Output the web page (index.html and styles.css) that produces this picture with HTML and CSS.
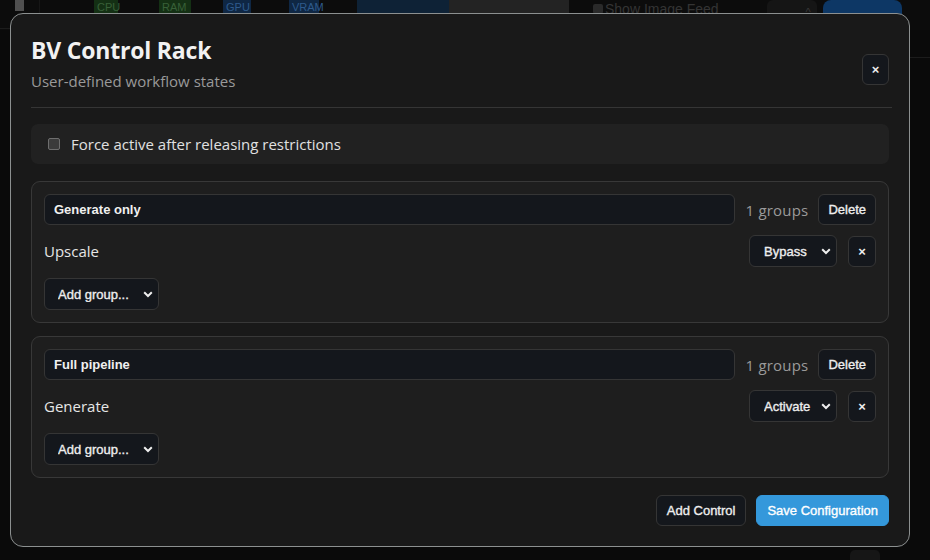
FILE: index.html
```html
<!DOCTYPE html>
<html lang="en">
<head>
<meta charset="utf-8">
<title>BV Control Rack</title>
<link rel="stylesheet" href="styles.css">
</head>
<body>
<div class="app">
  <div class="topbar">
    <span class="bookmark"></span>
    <span class="vsep"></span>
    <span class="stat stat-cpu">CPU</span>
    <span class="stat stat-ram">RAM</span>
    <span class="stat stat-gpu">GPU</span>
    <span class="stat stat-vram">VRAM</span>
    <span class="tab tab-blue"></span>
    <span class="tab tab-gray"></span>
    <span class="feed"><span class="feed-box"></span>Show Image Feed</span>
    <span class="mini">^</span>
    <span class="pill"></span>
  </div>
  <div class="side-line side-left"></div>
  <div class="side-line side-right"></div>
  <div class="bottom-btn"></div>
</div>

<div class="modal">
  <div class="modal-head">
    <div class="head-text">
      <h1 class="title">BV Control Rack</h1>
      <div class="subtitle">User-defined workflow states</div>
    </div>
    <button class="btn btn-x btn-close">×</button>
  </div>

  <label class="force-row">
    <input type="checkbox" class="chk">
    <span>Force active after releasing restrictions</span>
  </label>

  <div class="group-card">
    <div class="card-head">
      <input class="name-input" value="Generate only">
      <span class="count">1 groups</span>
      <button class="btn">Delete</button>
    </div>
    <div class="ctrl-row">
      <span class="ctrl-name">Upscale</span>
      <select class="sel sel-mode"><option>Bypass</option><option>Activate</option></select>
      <button class="btn btn-x btn-rm">×</button>
    </div>
    <select class="sel sel-add"><option>Add group...</option></select>
  </div>

  <div class="group-card">
    <div class="card-head">
      <input class="name-input" value="Full pipeline">
      <span class="count">1 groups</span>
      <button class="btn">Delete</button>
    </div>
    <div class="ctrl-row">
      <span class="ctrl-name">Generate</span>
      <select class="sel sel-mode"><option>Activate</option><option>Bypass</option></select>
      <button class="btn btn-x btn-rm">×</button>
    </div>
    <select class="sel sel-add"><option>Add group...</option></select>
  </div>

  <div class="modal-foot">
    <button class="btn btn-foot">Add Control</button>
    <button class="btn btn-foot btn-primary">Save Configuration</button>
  </div>
</div>
</body>
</html>
```

FILE: styles.css
```css
* { box-sizing: border-box; }
html, body { margin: 0; padding: 0; }
body {
  width: 930px;
  height: 560px;
  overflow: hidden;
  background: #0a0a0a;
  font-family: "Open Sans", "Noto Sans", sans-serif;
  position: relative;
}

/* dimmed background app */
.app { position: absolute; inset: 0; }
.topbar {
  display: flex;
  align-items: flex-start;
  height: 30px;
  background: #0c0c0c;
  font-family: "Liberation Sans", Arial, sans-serif;
  font-size: 11px;
}
.bookmark { width: 9px; height: 11px; background: #505050; margin-left: 15px; }
.vsep { width: 1px; height: 30px; background: #161616; margin-left: 15px; }
.stat { height: 30px; padding: 1px 3px 0; color: #386038; }
.stat-cpu { margin-left: 54px; width: 24px; background: #143014; }
.stat-ram { margin-left: 41px; width: 32px; background: #143014; }
.stat-gpu { margin-left: 32px; width: 28px; background: #0f2744; color: #2e5a8c; }
.stat-vram { margin-left: 38px; width: 30px; background: #0f2744; color: #2e5a8c; }
.tab { height: 30px; }
.tab-blue { margin-left: 38px; width: 92px; background: #0e2236; }
.tab-gray { width: 120px; background: #232323; }
.feed { margin-left: 24px; color: #343434; font-size: 14px; display: flex; gap: 2px; padding-top: 1px; }
.feed-box { width: 10px; height: 10px; background: #2a2a2a; border-radius: 2px; margin-top: 3px; }
.mini { margin-left: 48px; width: 50px; height: 30px; background: #151515; color: #3a3a3a; text-align: right; padding: 6px 6px 0 0; border-radius: 6px; }
.pill { margin-left: 6px; width: 79px; height: 30px; background: #0d3765; border-radius: 8px; }
.side-line { position: absolute; height: 1px; background: #1c1c1c; }
.side-left { left: 0; width: 10px; top: 28px; }
.side-right { right: 0; width: 20px; top: 57px; }
.bottom-btn { position: absolute; left: 850px; top: 550px; width: 30px; height: 20px; background: #161616; border-radius: 5px; }

/* modal */
.modal {
  position: absolute;
  left: 10px;
  top: 13px;
  width: 900px;
  height: 534px;
  background: #191919;
  border: 1px solid #8c9090;
  border-radius: 13px;
  padding: 20px 20px 0 20px;
  color: #e6e6e6;
  display: flex;
  flex-direction: column;
}
.modal-head {
  display: flex;
  align-items: flex-start;
  justify-content: space-between;
  padding-bottom: 16px;
  border-bottom: 1px solid #353535;
  margin-right: -3px;
}
.title {
  margin: 0;
  font-size: 23px;
  line-height: 30px;
  padding-top: 1px;
  font-weight: 700;
  color: #f2f2f2;
  letter-spacing: -0.2px;
}
.subtitle {
  margin-top: 6px;
  font-size: 15px;
  line-height: 20px;
  color: #9a9a9a;
}

.btn {
  font-family: "Liberation Sans", Arial, sans-serif;
  font-weight: 400;
  font-size: 13px;
  color: #eeeeee;
  -webkit-text-stroke: 0.35px #eeeeee;
  background: #14171c;
  border: 1px solid #353535;
  border-radius: 6px;
  height: 31px;
  padding: 0 9px;
  cursor: pointer;
}
.btn-x { font-size: 13px; padding: 0; font-weight: 700; -webkit-text-stroke: 0; }
.btn-close { width: 27px; height: 31px; margin-right: 3px; margin-top: 20px; }
.btn-rm { width: 28px; height: 31px; margin-left: 11px; }

.force-row {
  margin-top: 16px;
  height: 40px;
  background: #212121;
  border-radius: 7px;
  display: flex;
  align-items: center;
  padding-left: 17px;
  font-size: 15px;
  color: #e0e0e0;
}
.chk {
  appearance: none;
  -webkit-appearance: none;
  width: 12px;
  height: 12px;
  margin: 0 11px 0 0;
  border: 1px solid #6e6e6e;
  border-radius: 2px;
  background: #3b3b3b;
}

.group-card {
  margin-top: 17px;
  border: 1px solid #383838;
  border-radius: 9px;
  background: #1e1e1e;
  padding: 12px;
  display: flex;
  flex-direction: column;
  align-items: flex-start;
}
.group-card + .group-card { margin-top: 13px; }
.card-head {
  display: flex;
  align-items: center;
  width: 100%;
}
.name-input {
  flex: 1;
  height: 31px;
  background: #14171c;
  border: 1px solid #353535;
  border-radius: 6px;
  color: #f0f0f0;
  font-family: "Liberation Sans", Arial, sans-serif;
  font-weight: 700;
  font-size: 13px;
  padding: 0 9px;
  outline: none;
}
.count {
  margin: 0 10px 0 11px;
  font-size: 15px;
  color: #9a9a9a;
  letter-spacing: 0.2px;
}
.ctrl-row {
  margin-top: 10px;
  display: flex;
  align-items: center;
  width: 100%;
}
.ctrl-name {
  flex: 1;
  font-size: 15px;
  color: #e6e6e6;
}
.sel {
  appearance: none;
  -webkit-appearance: none;
  height: 32px;
  background-color: #14171c;
  background-image: url("data:image/svg+xml;utf8,<svg xmlns='http://www.w3.org/2000/svg' width='10' height='7' viewBox='0 0 10 7'><path d='M1.2 1.3 L5 5 L8.8 1.3' fill='none' stroke='%23eeeeee' stroke-width='2'/></svg>");
  background-repeat: no-repeat;
  background-position: right 5px center;
  border: 1px solid #353535;
  border-radius: 6px;
  color: #eeeeee;
  -webkit-text-stroke: 0.35px #eeeeee;
  font-family: "Liberation Sans", Arial, sans-serif;
  font-weight: 400;
  font-size: 13px;
  padding: 0 18px 0 13px;
  outline: none;
}
.sel-mode { width: 88px; padding-left: 14px; }
.sel-add { width: 115px; margin-top: 11px; }

.modal-foot {
  margin-top: 17px;
  display: flex;
  justify-content: flex-end;
  gap: 10px;
}
.btn-foot { height: 31px; padding: 0 10px; }
.btn-primary {
  background: #3498db;
  border-color: #3498db;
  color: #ffffff;
  -webkit-text-stroke: 0.35px #ffffff;
}
```
